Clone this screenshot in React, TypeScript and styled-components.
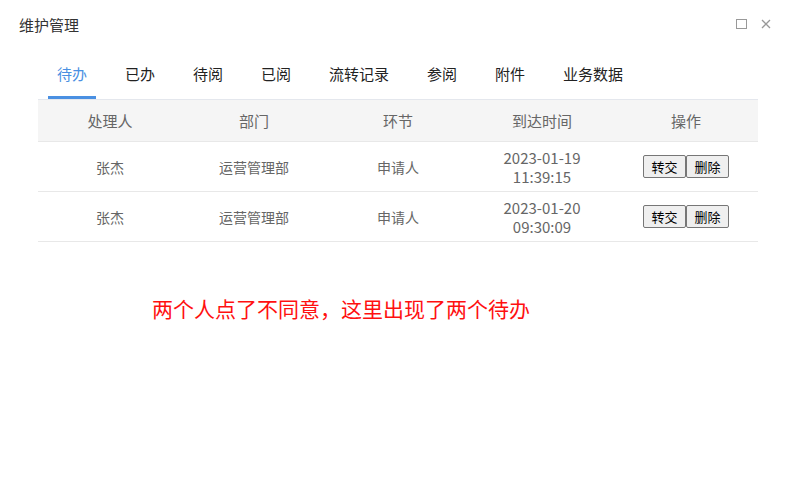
import React from "react";
import styled, { createGlobalStyle } from "styled-components";

const GlobalStyle = createGlobalStyle`
    body {
        margin: 0;
        background: #fff;
        font-family: "Noto Sans CJK SC", "Noto Sans", sans-serif;
    }
`;

const tabs = ["待办", "已办", "待阅", "已阅", "流转记录", "参阅", "附件", "业务数据"];
const columns = ["处理人", "部门", "环节", "到达时间", "操作"];

const rows = [
    { user: "张杰", dept: "运营管理部", step: "申请人", date: "2023-01-19", time: "11:39:15" },
    { user: "张杰", dept: "运营管理部", step: "申请人", date: "2023-01-20", time: "09:30:09" },
];

const App: React.FC = () => {
    return (
        <>
            <GlobalStyle />
            <Dialog>
                <Header>
                    <Title>维护管理</Title>
                    <Tools>
                        <svg width="11" height="10" viewBox="0 0 11 10">
                            <rect x="0.5" y="0.5" width="10" height="9" fill="none" stroke="#999" strokeWidth="1" />
                        </svg>
                        <svg width="10" height="10" viewBox="0 0 10 10">
                            <path d="M1 1 L9 9 M9 1 L1 9" stroke="#999" strokeWidth="1.3" />
                        </svg>
                    </Tools>
                </Header>
                <Body>
                    <TabBar>
                        {tabs.map((t, i) => (
                            <Tab key={t} $active={i === 0}>
                                {t}
                            </Tab>
                        ))}
                    </TabBar>
                    <Table>
                        <thead>
                            <tr>
                                {columns.map((c) => (
                                    <Th key={c}>{c}</Th>
                                ))}
                            </tr>
                        </thead>
                        <tbody>
                            {rows.map((r) => (
                                <tr key={r.date}>
                                    <Td>{r.user}</Td>
                                    <Td>{r.dept}</Td>
                                    <Td>{r.step}</Td>
                                    <Td>
                                        <DateLine>{r.date}</DateLine>
                                        <DateLine>{r.time}</DateLine>
                                    </Td>
                                    <Td>
                                        <Actions>
                                            <ActionButton>转交</ActionButton>
                                            <ActionButton>删除</ActionButton>
                                        </Actions>
                                    </Td>
                                </tr>
                            ))}
                        </tbody>
                    </Table>
                    <Note>两个人点了不同意，这里出现了两个待办</Note>
                </Body>
            </Dialog>
        </>
    );
};

export default App;

const Dialog = styled.div`
    width: 795px;
    height: 484px;
    background: #fff;
`;

const Header = styled.div`
    align-items: center;
    display: flex;
    height: 48px;
    justify-content: space-between;
    padding: 0 24px 0 19px;
`;

const Title = styled.div`
    color: #333;
    font-size: 15px;
`;

const Tools = styled.div`
    align-items: center;
    column-gap: 14px;
    display: flex;
`;

const Body = styled.div`
    padding: 4px 37px 0 38px;
`;

const TabBar = styled.div`
    border-bottom: 1px solid #e4e7ed;
    column-gap: 20px;
    display: flex;
    padding-left: 10px;
`;

const Tab = styled.div<{ $active?: boolean }>`
    border-bottom: 3px solid ${(p) => (p.$active ? "#4a90e2" : "transparent")};
    color: ${(p) => (p.$active ? "#4a90e2" : "#222")};
    font-size: 15px;
    line-height: 44px;
    padding: 0 9px;
`;

const Table = styled.table`
    border-collapse: collapse;
    table-layout: fixed;
    width: 720px;
`;

const Th = styled.th`
    background: #f5f5f5;
    border-bottom: 1px solid #e8e8e8;
    color: #666;
    font-size: 15px;
    font-weight: normal;
    height: 41px;
    padding: 0;
    text-align: center;
`;

const Td = styled.td`
    border-bottom: 1px solid #e8e8e8;
    color: #666;
    font-size: 14px;
    height: 49px;
    padding: 0;
    text-align: center;
`;

const DateLine = styled.div`
    font-size: 15px;
    line-height: 19px;
`;

const Actions = styled.div`
    display: flex;
    justify-content: center;
`;

const ActionButton = styled.button`
    background: #efefef;
    border: 1px solid #767676;
    border-radius: 2px;
    color: #000;
    font-family: "Noto Sans CJK SC", sans-serif;
    font-size: 13px;
    height: 23px;
    line-height: 19px;
    padding: 0 5px;
    width: 43px;
`;

const Note = styled.div`
    color: #ff1010;
    font-size: 21px;
    margin: 51px 0 0 114px;
`;
